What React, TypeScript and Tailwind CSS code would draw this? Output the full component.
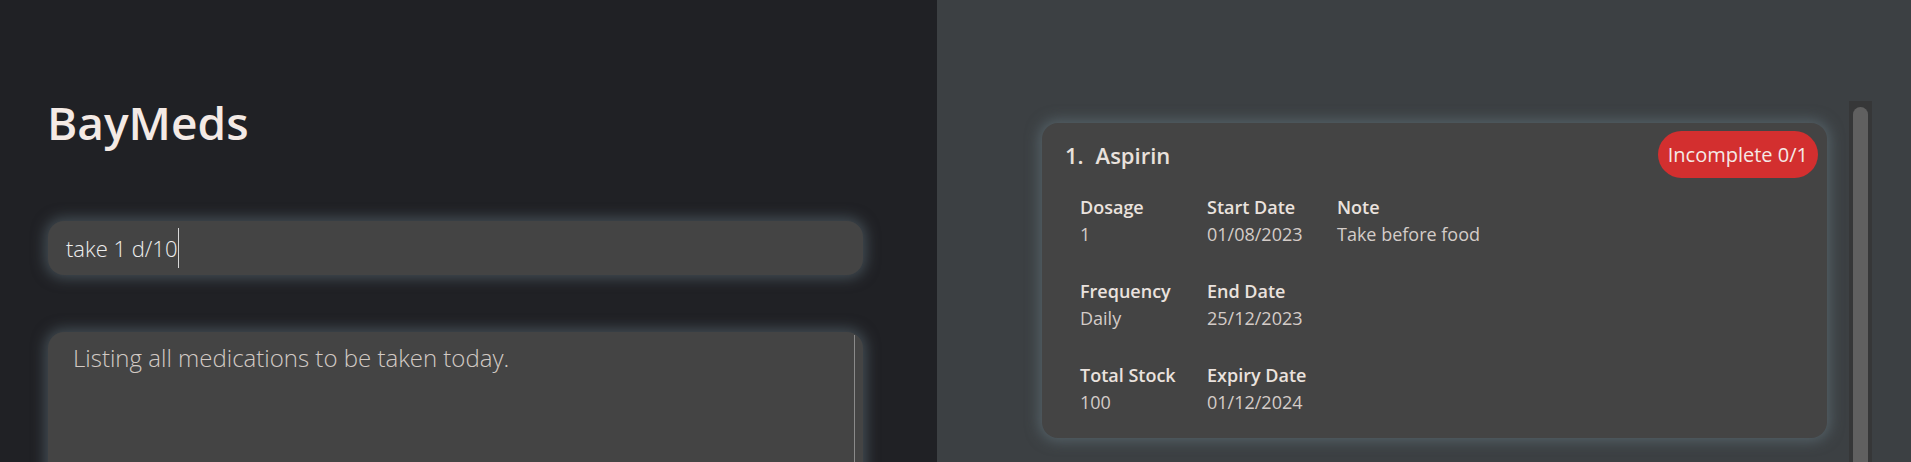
import React from 'react';

const fields = [
  [
    { label: 'Dosage', value: '1' },
    { label: 'Start Date', value: '01/08/2023' },
    { label: 'Note', value: 'Take before food' },
  ],
  [
    { label: 'Frequency', value: 'Daily' },
    { label: 'End Date', value: '25/12/2023' },
  ],
  [
    { label: 'Total Stock', value: '100' },
    { label: 'Expiry Date', value: '01/12/2024' },
  ],
];

const colWidths = ['w-[127px]', 'w-[130px]', 'w-[200px]'];

function MedCard() {
  return (
    <div className="rounded-[16px] bg-[#444444] shadow-[0_0_14px_3px_rgba(105,125,135,0.55)] pl-[23px] pr-[9px] pt-[8px] pb-[22px]">
      {/* Header */}
      <div className="flex items-center justify-between">
        <div className="flex items-center gap-[12px] text-[22px] font-semibold text-[#e9e1dc] leading-[30px]">
          <span>1.</span>
          <span>Aspirin</span>
        </div>
        <div className="h-[47px] px-[10px] rounded-full bg-[#d32f2f] flex items-center text-[20px] text-[#f5e9e6]">
          Incomplete 0/1
        </div>
      </div>

      {/* Fields */}
      <div className="pl-[15px] pt-[16px] flex flex-col gap-[30px]">
        {fields.map((row, i) => (
          <div key={i} className="flex">
            {row.map((f, j) => (
              <div key={f.label} className={`${colWidths[j]} flex flex-col`}>
                <span className="text-[18px] font-semibold text-[#eae2de] leading-[26px]">{f.label}</span>
                <span className="text-[18px] text-[#d4ccc8] leading-[28px]">{f.value}</span>
              </div>
            ))}
          </div>
        ))}
      </div>
    </div>
  );
}

export default function App() {
  return (
    <div
      className="flex h-[462px] w-[1911px] overflow-hidden"
      style={{ fontFamily: '"Open Sans", "Noto Sans", sans-serif' }}
    >
      {/* Left panel */}
      <div className="w-[937px] shrink-0 bg-[#202125] pl-[48px] pr-[74px] pt-[94px]">
        <h1 className="-ml-[1px] text-[46px] font-semibold text-[#f4eae5] leading-[56px]">BayMeds</h1>

        <div className="mt-[71px] h-[54px] rounded-[16px] bg-[#444444] shadow-[0_0_14px_3px_rgba(105,125,135,0.5)] flex items-center pl-[18px]">
          <span className="text-[22px] font-light text-[#eeeeee]">take 1 d/10</span>
          <span className="ml-[1px] w-[1px] h-[40px] bg-[#d8d8d8]" />
        </div>

        <div className="mt-[57px] h-[160px] rounded-[16px] bg-[#444444] shadow-[0_0_14px_3px_rgba(105,125,135,0.5)] flex">
          <div className="flex-1 pl-[25px] pt-[10px] text-[24px] font-light text-[#d2cac4] leading-[32px]">
            Listing all medications to be taken today.
          </div>
          <div className="w-[9px] mt-[3px] border-l border-[#8a8a8a]" />
        </div>
      </div>

      {/* Right panel */}
      <div className="flex-1 bg-[#3c4043] flex pl-[105px] pt-[101px] pr-[39px]">
        <div className="flex-1 pt-[22px] pr-[22px]">
          <MedCard />
        </div>
        <div className="w-[23px] bg-[#363738] pt-[6px] px-[4px]">
          <div className="h-full rounded-t-full bg-[#606060]" />
        </div>
      </div>
    </div>
  );
}
